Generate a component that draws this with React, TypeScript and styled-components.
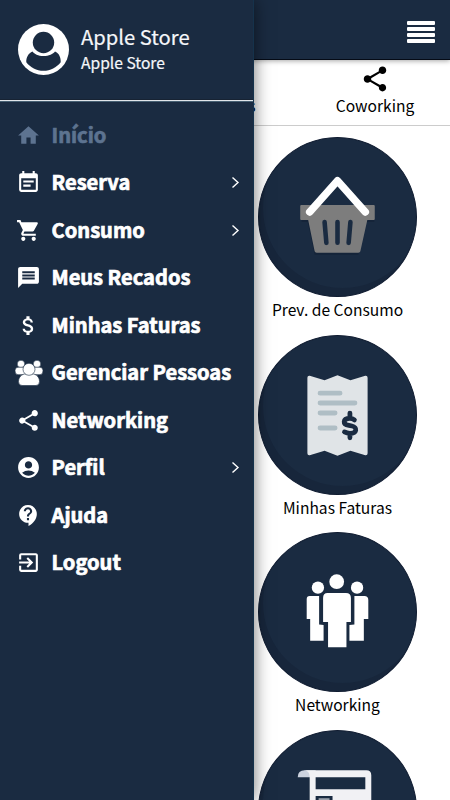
import React from "react";
import styled, { createGlobalStyle } from "styled-components";
import {
  MdAccountCircle, MdAttachMoney, MdContactSupport, MdEventNote, MdExitToApp,
  MdHome, MdMessage, MdShare, MdShoppingCart,
} from "react-icons/md";

const NAVY = "#1a2b41";

const GlobalStyle = createGlobalStyle`
  * { box-sizing: border-box; }
  body { margin: 0; background: #fff; overflow: hidden; }
`;

const Screen = styled.div`
  position: relative;
  width: 450px;
  height: 800px;
  overflow: hidden;
  background: #fff;
  color: #000;
  font-family: "Noto Sans CJK SC", "Noto Sans", sans-serif;
`;

const TopBar = styled.header`
  height: 60px;
  padding: 4px 15px 0 0;
  display: flex;
  align-items: center;
  justify-content: flex-end;
  background: ${NAVY};
  border-bottom: 1px solid #050b16;
  box-shadow: 0 1px 5px rgba(0, 0, 0, 0.35);
`;

const MenuButton = styled.button`
  display: grid;
  gap: 2px;
  width: 28px;
  padding: 0;
  border: 0;
  background: none;
`;

const MenuBar = styled.span`
  height: 4px;
  border-radius: 1px;
  background: #fff;
`;

const Tabs = styled.nav`
  height: 66px;
  display: grid;
  grid-template-columns: repeat(3, 1fr);
  border-bottom: 1px solid #ccc;
`;

const Tab = styled.a`
  display: flex;
  flex-direction: column;
  align-items: center;
  padding-top: 4px;
  font-size: 15.6px;
  line-height: 22px;
  svg { width: 30px; height: 30px; }
`;

const Cards = styled.main`
  width: 225px;
  margin-left: auto;
  padding-top: 11.3px;
  display: grid;
  grid-auto-rows: 197.5px;
`;

const Card = styled.section`
  display: flex;
  flex-direction: column;
  align-items: center;
`;

const Disc = styled.div`
  width: 159px;
  height: 160px;
  border-radius: 50%;
  background: ${NAVY};
  border: 1px solid #101c31;
  box-shadow: inset 5px -9px 0 -1px #17263b;
  svg { display: block; width: 157px; height: 158px; }
`;

const CardLabel = styled.span`
  font-size: 15.6px;
  line-height: 25px;
  white-space: nowrap;
`;

const Drawer = styled.aside`
  position: absolute;
  inset: 0 auto 0 0;
  width: 254px;
  background: ${NAVY};
  border-right: 1px solid #15324b;
  color: #fff;
  box-shadow: 0 0 16px rgba(0, 0, 0, 0.55);
`;

const Profile = styled.div`
  height: 102px;
  display: flex;
  align-items: flex-start;
  gap: 12px;
  padding: 24px 0 0 18px;
  border-bottom: 1px solid #476073;
  box-shadow: inset 0 -1px #e1e6ea, inset 0 -2px #172333;
  > svg { width: 51px; height: 51px; }
`;

const Names = styled.div`
  display: flex;
  flex-direction: column;
`;

const Name = styled.span<{ $small?: boolean }>`
  font-size: ${({ $small }) => ($small ? 15.6 : 20.2)}px;
  line-height: ${({ $small }) => ($small ? 24 : 26)}px;
  color: #f5f7fa;
  -webkit-text-stroke: 0.2px currentColor;
`;

const Menu = styled.nav`
  display: grid;
  grid-auto-rows: 47.5px;
  padding-top: 9.5px;
`;

const MenuItem = styled.a<{ $active?: boolean }>`
  display: grid;
  grid-template-columns: 28px 180px 10px;
  column-gap: 9px;
  align-items: center;
  padding-left: 14.5px;
  color: ${({ $active }) => ($active ? "#5d7390" : "#fff")};
  > svg:first-child { width: 25px; height: 25px; justify-self: center; }
`;

const MenuText = styled.span`
  padding-bottom: 1px;
  font-size: 20.1px;
  line-height: 28px;
  font-weight: 700;
  -webkit-text-stroke: 0.7px currentColor;
  white-space: nowrap;
`;

const Chevron = styled.svg`
  width: 9px;
  height: 13px;
  margin-left: -10px;
  fill: none;
  stroke: #fff;
  stroke-width: 1.4;
`;

const GroupSvg = styled.svg`
  &&& { width: 28px; height: 26px; }
`;

const PeopleIcon = () => (
  <GroupSvg viewBox="0 0 28 26" fill="#fff" stroke={NAVY} strokeWidth=".6">
    <circle cx="6" cy="4" r="3.800" />
    <circle cx="22" cy="4" r="3.800" />
    <path d="M3 7.200h8v7.500H3q-3 0-3-4 0-3.500 3-3.500ZM25 7.200h-8v7.500h8q3 0 3-4 0-3.500-3-3.500Z" />
    <path d="M9 14h10q5.500 2 5.500 7.500 0 4-3.500 4H7q-3.500 0-3.500-4Q3.500 16 9 14Z" />
    <circle cx="14" cy="9.300" r="6" />
  </GroupSvg>
);

const Avatar = () => (
  <svg viewBox="0 0 51 51">
    <circle cx="25.500" cy="25.500" r="25.500" fill="#fff" />
    <circle cx="25.500" cy="18.500" r="10.700" fill={NAVY} />
    <path d="M14.500 27.500C16.500 30 20 32 25.500 32S35 30 37 27.500C41 29 43 33.500 42.700 38.200 38.500 43.500 32.500 46.800 25.500 46.800S12.500 43.500 8.300 38.200C8 33.500 10.500 29 14.500 27.500Z" fill={NAVY} />
  </svg>
);

const Basket = () => (
  <svg viewBox="0 0 158 158">
    <path d="M43 71h73v13h-9l-7 33H56l-7-33h-6Z" fill="#152439" />
    <path d="M42.500 67h73q1 0 1 1v13q0 1-1 1H109l-7 31.500q-.3 1.500-2 1.500H58q-1.700 0-2-1.500L49.500 82h-7q-1 0-1-1V68q0-1 1-1Z" fill="#7d7d7d" />
    <path d="m66 84 1.800 21M79 84v21M92 84l-1.800 21" stroke={NAVY} strokeWidth="4.600" strokeLinecap="round" />
    <path d="m51 74 28-31.500L107 74" fill="none" stroke="#fff" strokeWidth="7.500" strokeLinecap="round" strokeLinejoin="round" />
  </svg>
);

const Invoice = () => (
  <svg viewBox="0 0 158 158">
    <path d="M51 39.500 66 44l13-5 13 5 15-4.500q2.300-.3 2.300 2v76q0 2.300-2.300 2L92 115l-13 5-13-5-15 4.500q-2.300.3-2.300-2v-76q0-2.300 2.300-2Z" fill="#e0e4e7" />
    <path d="M61.500 57h20M61.500 67h35M61.500 77h15M61.500 92h15" stroke="#afbec5" strokeWidth="5" strokeLinecap="round" />
    <path d="M96 84c-1.500-1.200-3-1.500-4.500-1.500-7.500 0-7.500 6-1 7l3 .6c6 1.200 5 7.400-2 7.400-2 0-3.800-.5-5.500-1.500M91.500 77v5M91.500 98v4" fill="none" stroke={NAVY} strokeWidth="4.800" strokeLinecap="round" />
  </svg>
);

const Team = () => (
  <svg viewBox="0 0 158 158" fill="#fff">
    <circle cx="59.300" cy="54.500" r="6.200" /><circle cx="98.700" cy="54.500" r="6.200" />
    <circle cx="78.200" cy="48.500" r="7.400" />
    <path d="M51 63h9.500v28.500l4.500.5v16H51.500V86H48V66q0-3 3-3ZM96 63h10q4 0 4 4v19h-4.500v22H91V92l5-.5Z" />
    <path d="M69 60h18.500q5 0 5 5v24H88v25.500H69.500V89h-5V65q0-5 4.500-5Z" />
  </svg>
);

const Document = () => (
  <svg viewBox="0 0 158 158">
    <path d="M39 46q0-7 7-7h11v7Z" fill="#ccd2de" />
    <path d="M45 39h63q5 0 5 5v85H51V46q0-7-6-7Z" fill="#f1f1f4" />
    <path d="M57 46h50v12H57ZM57 65h17v20H57Z" fill={NAVY} />
    <path d="M60 68h11" stroke="#fff" strokeWidth="1" />
  </svg>
);

const menuItems = [
  { label: "Início", icon: <MdHome />, active: true },
  { label: "Reserva", icon: <MdEventNote />, nested: true },
  { label: "Consumo", icon: <MdShoppingCart />, nested: true },
  { label: "Meus Recados", icon: <MdMessage /> },
  { label: "Minhas Faturas", icon: <MdAttachMoney /> },
  { label: "Gerenciar Pessoas", icon: <PeopleIcon /> },
  { label: "Networking", icon: <MdShare /> },
  { label: "Perfil", icon: <MdAccountCircle />, nested: true },
  { label: "Ajuda", icon: <MdContactSupport /> },
  { label: "Logout", icon: <MdExitToApp /> },
];

const cards = [
  { label: "Prev. de Consumo", art: <Basket /> },
  { label: "Minhas Faturas", art: <Invoice /> },
  { label: "Networking", art: <Team /> },
  { label: "", art: <Document /> },
];

export default function App() {
  return (
    <Screen>
      <GlobalStyle />
      <TopBar>
        <MenuButton aria-label="Menu"><MenuBar /><MenuBar /><MenuBar /><MenuBar /></MenuButton>
      </TopBar>
      <Tabs>
        <Tab />
        <Tab><MdMessage />Recados</Tab>
        <Tab><MdShare />Coworking</Tab>
      </Tabs>
      <Cards>
        {cards.map(({ label, art }, i) => (
          <Card key={i}><Disc>{art}</Disc><CardLabel>{label}</CardLabel></Card>
        ))}
      </Cards>
      <Drawer>
        <Profile>
          <Avatar />
          <Names><Name>Apple Store</Name><Name $small>Apple Store</Name></Names>
        </Profile>
        <Menu>
          {menuItems.map(({ label, icon, active, nested }) => (
            <MenuItem key={label} $active={active}>
              {icon}
              <MenuText>{label}</MenuText>
              {nested && <Chevron viewBox="0 0 9 13"><path d="m1.500 1.500 5.500 5-5.500 5" /></Chevron>}
            </MenuItem>
          ))}
        </Menu>
      </Drawer>
    </Screen>
  );
}
